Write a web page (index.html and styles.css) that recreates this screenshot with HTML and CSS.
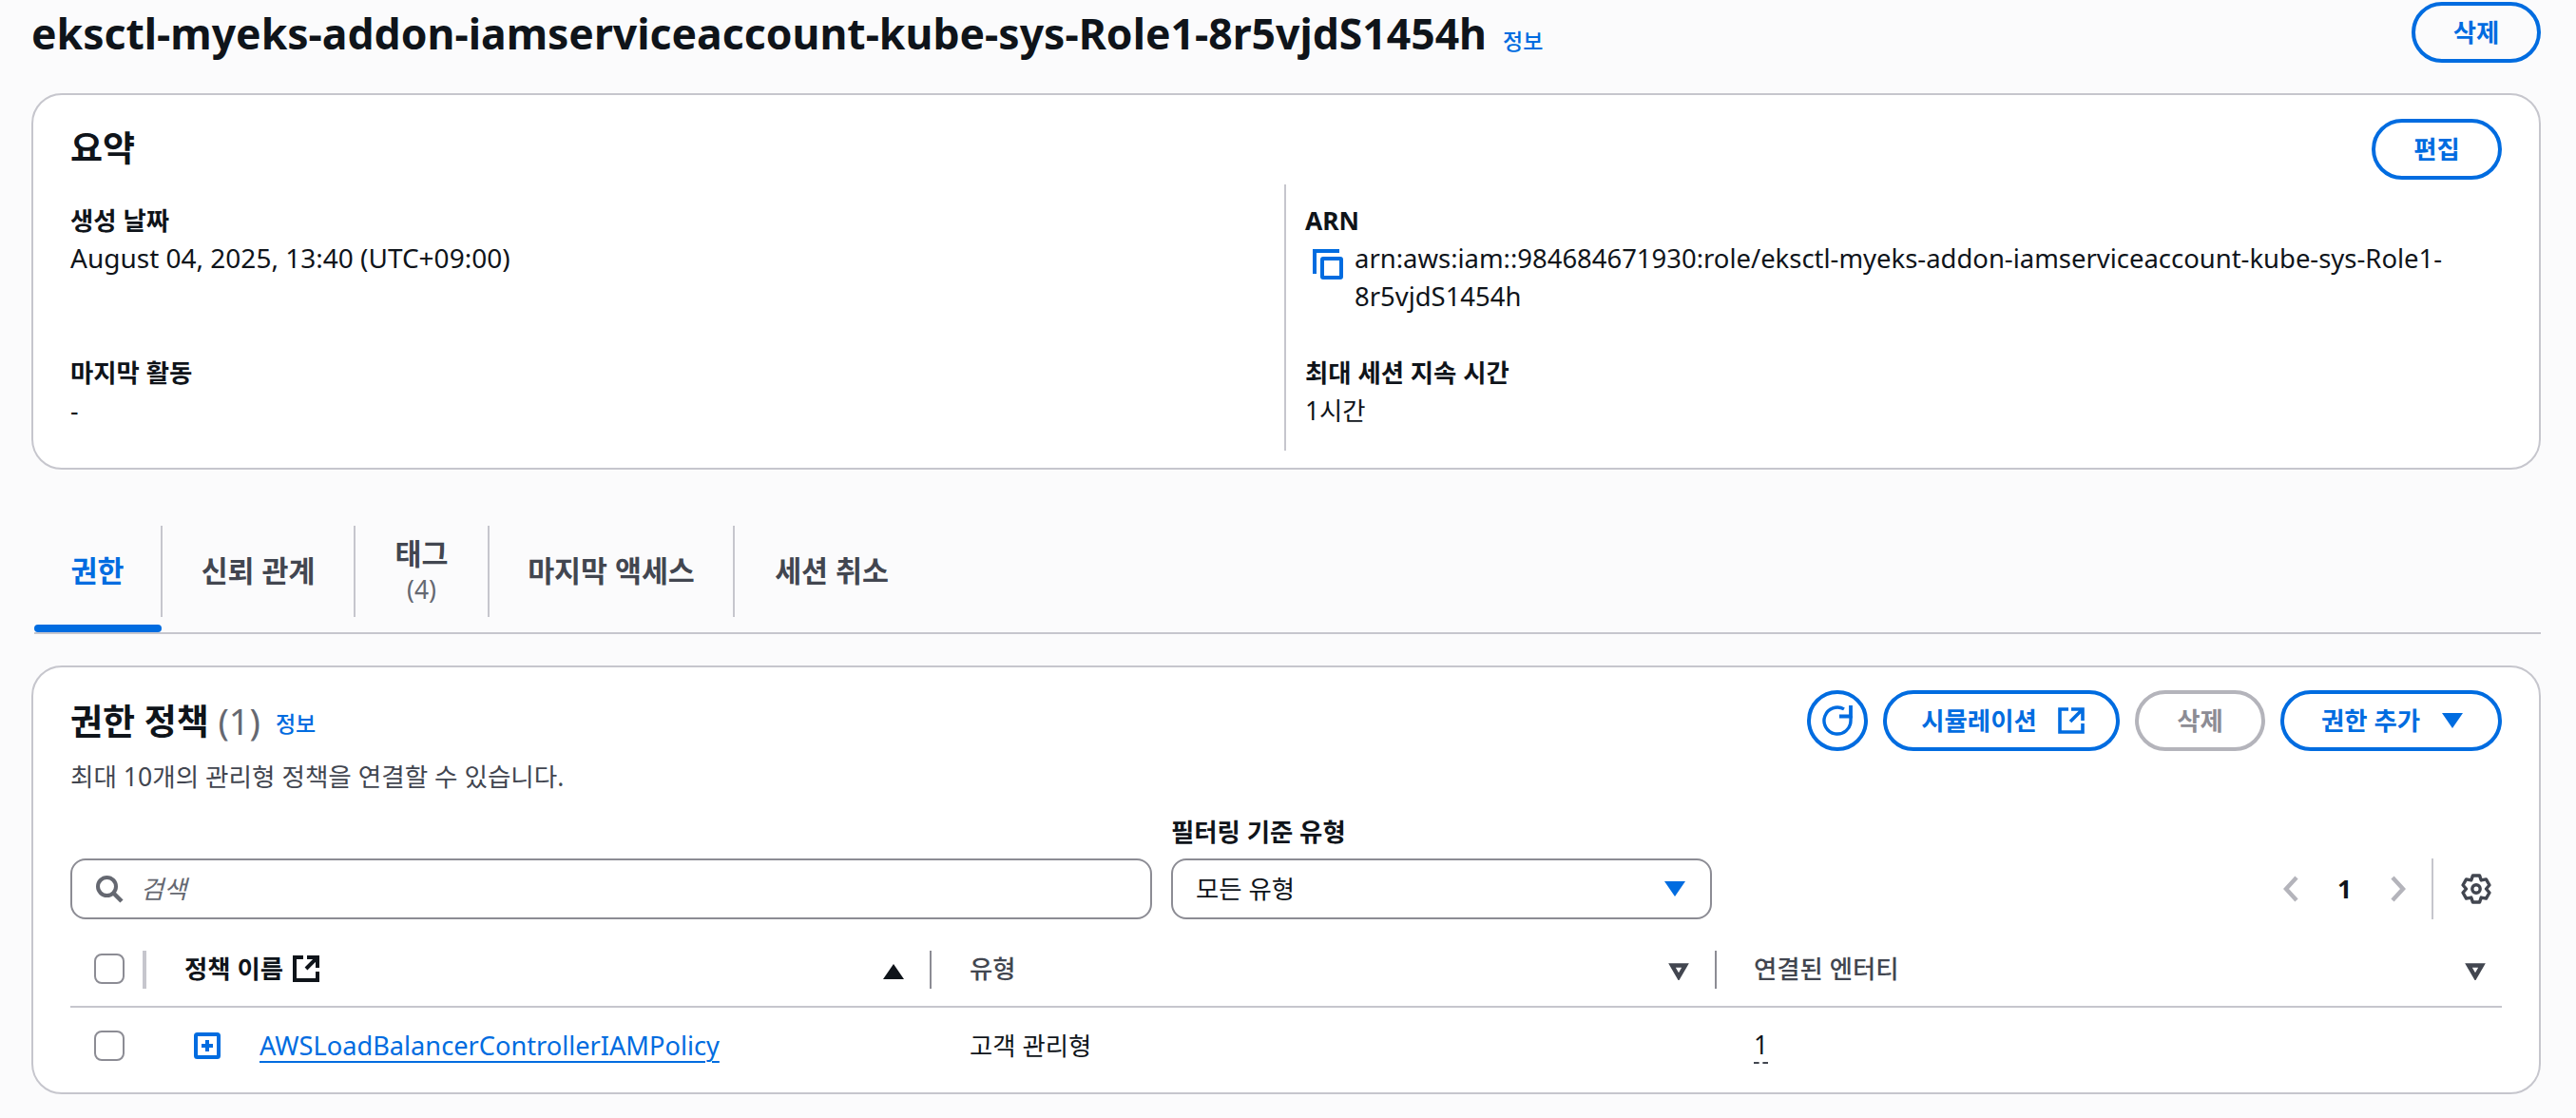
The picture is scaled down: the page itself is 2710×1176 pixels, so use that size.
FILE: index.html
```html
<!DOCTYPE html>
<html lang="ko">
<head>
<meta charset="utf-8">
<title>IAM Role</title>
<link rel="stylesheet" href="styles.css">
</head>
<body>
<div class="page">
  <header class="page-head">
    <div class="title-wrap">
      <h1 class="title">eksctl-myeks-addon-iamserviceaccount-kube-sys-Role1-8r5vjdS1454h</h1>
      <a class="info info-title">정보</a>
    </div>
    <button class="btn btn-top">삭제</button>
  </header>

  <section class="card summary">
    <div class="summary-head">
      <h2 class="h2">요약</h2>
      <button class="btn btn-edit">편집</button>
    </div>
    <div class="summary-grid">
      <div class="col col-left">
        <div class="kv">
          <div class="k">생성 날짜</div>
          <div class="v date">August 04, 2025, 13:40 (UTC+09:00)</div>
        </div>
        <div class="kv">
          <div class="k">마지막 활동</div>
          <div class="v">-</div>
        </div>
      </div>
      <div class="col col-right">
        <div class="kv">
          <div class="k">ARN</div>
          <div class="arn">
            <svg class="copy" viewBox="0 0 32 32" fill="none" stroke="#006ce0" stroke-width="4"><path d="M2 26V2h26"/><rect x="10" y="10" width="20" height="20" rx="1"/></svg>
            <div class="v arn-text">arn:aws:iam::984684671930:role/eksctl-myeks-addon-iamserviceaccount-kube-sys-Role1-<br>8r5vjdS1454h</div>
          </div>
        </div>
        <div class="kv">
          <div class="k">최대 세션 지속 시간</div>
          <div class="v">1시간</div>
        </div>
      </div>
    </div>
  </section>

  <nav class="tabs">
    <div class="tab tab-active"><span>권한</span></div>
    <div class="tab tab-trust"><span>신뢰 관계</span></div>
    <div class="tab tab-tag"><span>태그</span><span class="count">(4)</span></div>
    <div class="tab tab-last"><span>마지막 액세스</span></div>
    <div class="tab tab-end"><span>세션 취소</span></div>
  </nav>

  <section class="card policies">
    <div class="pol-head">
      <div>
        <div class="pol-title"><h2 class="h2">권한 정책 <span class="h2-count">(1)</span></h2><a class="info">정보</a></div>
        <p class="desc">최대 10개의 관리형 정책을 연결할 수 있습니다.</p>
      </div>
      <div class="actions">
        <button class="btn btn-icon" aria-label="새로 고침">
          <svg class="ic-refresh" viewBox="0 0 32 32" fill="none" stroke="#006ce0" stroke-width="3.4"><path d="M30 11v5A14 14 0 1 1 23 3.900"/><path d="M30 0v11.500H18" stroke-width="3.8"/></svg>
        </button>
        <button class="btn btn-sim">시뮬레이션
          <svg class="ic-ext" viewBox="0 0 28 28" fill="none" stroke="currentColor" stroke-width="3.6"><path d="M11 2H2v24h24v-9"/><path d="M14 2h12v12M26 2 13 15" /></svg>
        </button>
        <button class="btn btn-del" disabled>삭제</button>
        <button class="btn btn-add">권한 추가
          <svg class="ic-caret" viewBox="0 0 24 18"><path d="M1 1h22L12 17z" fill="#006ce0"/></svg>
        </button>
      </div>
    </div>

    <div class="filters">
      <div class="search">
        <svg class="ic-search" viewBox="0 0 30 30" fill="none" stroke="#656871" stroke-width="4"><circle cx="12.5" cy="12.5" r="9.5"/><path d="m19 19 9 9" stroke-width="4.5"/></svg>
        <span class="ph">검색</span>
      </div>
      <div class="filter">
        <div class="filter-label">필터링 기준 유형</div>
        <div class="select"><span>모든 유형</span><svg class="ic-caret" viewBox="0 0 24 18"><path d="M1 1h22L12 17z" fill="#006ce0"/></svg></div>
      </div>
      <div class="pager">
        <svg class="ic-chev" viewBox="0 0 16 28" fill="none" stroke="#b4b4bb" stroke-width="4.4"><path d="M14 2 3 14l11 12"/></svg>
        <span class="pg-num">1</span>
        <svg class="ic-chev" viewBox="0 0 16 28" fill="none" stroke="#b4b4bb" stroke-width="4.4"><path d="m2 2 11 12L2 26"/></svg>
        <i class="pg-sep"></i>
        <svg class="ic-gear" viewBox="0 0 32 32" fill="none" stroke="#424650" stroke-width="3.4" stroke-linejoin="round"><path d="M12.490 1.930 19.510 1.930 21.250 6.910 26.430 5.920 29.940 12 26.500 16 29.940 20 26.430 26.080 21.250 25.090 19.510 30.070 12.490 30.070 10.750 25.090 5.570 26.080 2.060 20 5.500 16 2.060 12 5.570 5.920 10.750 6.910Z"/><circle cx="16" cy="16" r="4.200"/></svg>
      </div>
    </div>

    <div class="table">
      <div class="tr th">
        <div class="cell c-check"><i class="checkbox"></i><i class="th-sep"></i></div>
        <div class="cell c-name">
          <span class="th-strong">정책 이름</span>
          <svg class="ic-ext-b" viewBox="0 0 28 28" fill="none" stroke="#0f141a" stroke-width="4"><path d="M11 2H2v24h24v-9"/><path d="M15 2h11v11M26 2 14 14"/></svg>
          <svg class="ic-sort up" viewBox="0 0 24 18"><path d="M12 1 23 17H1z" fill="#0f141a"/></svg>
          <i class="th-sep dark"></i>
        </div>
        <div class="cell c-type">유형
          <svg class="ic-sort down" viewBox="0 0 24 18" fill="none" stroke="#424650" stroke-width="4.4"><path d="M5 2.500h14l-7 12z"/></svg>
          <i class="th-sep dark"></i>
        </div>
        <div class="cell c-ent">연결된 엔터티
          <svg class="ic-sort down" viewBox="0 0 24 18" fill="none" stroke="#424650" stroke-width="4.4"><path d="M5 2.500h14l-7 12z"/></svg>
        </div>
      </div>
      <div class="tr td">
        <div class="cell c-check"><i class="checkbox"></i></div>
        <div class="cell c-name">
          <svg class="ic-plus" viewBox="0 0 28 28"><rect x="2" y="2" width="24" height="24" rx="1.500" fill="none" stroke="#006ce0" stroke-width="4"/><path d="M14 8v12M8 14h12" stroke="#006ce0" stroke-width="4"/></svg>
          <a class="link">AWSLoadBalancerControllerIAMPolicy</a>
        </div>
        <div class="cell c-type">고객 관리형</div>
        <div class="cell c-ent"><span class="dotted">1</span></div>
      </div>
    </div>
  </section>
</div>
</body>
</html>
```
FILE: styles.css
```css
* { box-sizing: border-box; }
html, body { margin: 0; height: 100%; }
body {
  background: #fbfbfc;
  color: #0f141a;
  font-family: "Noto Sans", "Noto Sans CJK KR", sans-serif;
  font-size: 26.4px;
  line-height: 40px;
  overflow: hidden;
}
.page { padding: 0 37px 0 33px; }
h1, h2, p { margin: 0; }
svg { display: block; flex: none; }
i { display: block; }

.page-head { display: flex; justify-content: space-between; height: 98px; padding-top: 2px; }
.title-wrap { display: flex; align-items: baseline; gap: 17px; height: 72px; padding-top: 1px; }
.title { font-size: 44.5px; line-height: 64px; font-weight: 700; white-space: nowrap; }
.info { color: #006ce0; font-size: 23px; font-weight: 500; line-height: 32px; }

.btn {
  height: 64px;
  border: 4px solid #006ce0;
  border-radius: 40px;
  background: #fff;
  color: #006ce0;
  font: 700 26.4px/1 "Noto Sans", "Noto Sans CJK KR", sans-serif;
  display: flex;
  align-items: center;
  justify-content: center;
  gap: 22px;
  padding: 0;
}
.btn-top { width: 136px; background: #fbfbfc; }
.btn-edit { width: 137px; }

.card { background: #fff; border: 2px solid #c6c6cd; border-radius: 32px; }
.summary { height: 396px; padding: 25px 39px 0 39px; }
.summary-head { display: flex; justify-content: space-between; align-items: center; height: 64px; }
.h2 { font-size: 37px; line-height: 48px; font-weight: 700; }
.summary .h2 { margin-top: -3px; }
.summary-grid { display: grid; grid-template-columns: 1277px 1fr; grid-template-rows: 280px; margin-top: 5px; }
.col { display: flex; flex-direction: column; }
.col-right { border-left: 2px solid #c6c6cd; padding-left: 20px; }
.kv { height: 160px; padding-top: 18px; }
.kv:last-child { height: 120px; }
.k { font-weight: 700; line-height: 40px; }
.v { line-height: 40px; }
.date { font-size: 28px; margin-top: -1px; }
.arn-text { font-size: 27.45px; }
.arn { display: flex; gap: 12px; padding-left: 8px; }
.copy { width: 32px; height: 32px; margin-top: 10px; }

.tabs { display: flex; height: 173px; margin-left: 3px; padding-top: 59px; border-bottom: 2px solid #c6c6cd; align-items: flex-start; }
.tab {
  height: 96px;
  position: relative;
  display: flex;
  flex-direction: column;
  align-items: center;
  justify-content: center;
  color: #424650;
  font-weight: 700;
  font-size: 30.4px;
  line-height: 38px;
}
.tab > span { display: block; }
.tab-active, .tab-trust, .tab-tag, .tab-last { border-right: 2px solid #c6c6cd; }
.tab-active { width: 135px; color: #006ce0; }
.tab-active::after {
  content: "";
  position: absolute;
  left: 0;
  right: -1px;
  top: 104px;
  height: 8px;
  border-radius: 4px;
  background: #006ce0;
}
.tab-trust { width: 203px; }
.tab-tag { width: 141px; }
.tab-last { width: 258px; }
.tab-end { width: 204px; }
.count { font-weight: 400; font-size: 26.4px; color: #656871; line-height: 36px; }

.policies { height: 451px; margin-top: 33px; padding: 24px 39px 0 39px; }
.pol-head { display: flex; justify-content: space-between; height: 124px; }
.pol-title { display: flex; align-items: center; gap: 16px; height: 64px; }
.pol-title .info { padding-top: 6px; }
.h2-count { color: #656871; font-weight: 400; font-size: 38px; }
.desc { line-height: 40px; font-size: 26.6px; margin-top: 7px; color: #424650; }
.actions { display: flex; gap: 16px; }
.btn-icon { width: 64px; border-radius: 50%; }
.btn-sim { width: 249px; padding-left: 3px; }
.btn-del { width: 137px; border-color: #b4b4bb; color: #8c8c94; }
.btn-add { width: 233px; padding-left: 3px; }
.ic-refresh { width: 32px; height: 32px; }
.ic-ext { width: 28px; height: 28px; }
.ic-caret { width: 24px; height: 18px; }

.filters { display: grid; grid-template-columns: 1138px 569px 1fr; column-gap: 20px; height: 112px; margin-top: 5px; align-items: end; }
.search {
  height: 64px;
  border: 2px solid #8c8c94;
  border-radius: 16px;
  display: flex;
  align-items: center;
  gap: 18px;
  padding-left: 24px;
  background: #fff;
}
.ic-search { width: 30px; height: 30px; }
.ph { font-style: italic; color: #656871; }
.filter-label { font-weight: 700; line-height: 40px; margin-bottom: 8px; }
.select {
  height: 64px;
  border: 2px solid #8c8c94;
  border-radius: 16px;
  display: flex;
  align-items: center;
  justify-content: space-between;
  padding: 0 25px 0 24px;
}
.pager { display: flex; align-items: center; justify-content: flex-end; height: 64px; }
.ic-chev { width: 16px; height: 28px; }
.pg-num { font-weight: 700; width: 97px; text-align: center; }
.pg-sep { width: 2px; height: 64px; background: #c6c6cd; margin-left: 27px; margin-right: 29px; }
.ic-gear { width: 32px; height: 32px; margin-right: 11px; }

.tr { display: grid; grid-template-columns: 80px 826px 826px 1fr; }
.th { height: 93px; border-bottom: 2px solid #c6c6cd; color: #424650; font-weight: 500; }
.td { height: 80px; }
.cell { display: flex; align-items: center; position: relative; }
.th .cell { padding-top: 13px; }
.c-check { padding-left: 25px; }
.checkbox { width: 32px; height: 32px; border: 2px solid #8c8c94; border-radius: 8px; background: #fff; }
.th-sep { position: absolute; right: 0; top: 33px; width: 4px; height: 40px; background: #c6c6cd; }
.th-sep.dark { width: 2px; background: #8c8c94; }
.c-name { padding-left: 40px; gap: 10px; }
.c-type { padding-left: 40px; }
.c-ent { padding-left: 39px; }
.th .c-name { color: #0f141a; }
.th-strong { font-weight: 700; }
.ic-ext-b { width: 28px; height: 28px; }
.ic-sort { width: 24px; height: 18px; position: absolute; right: 28px; top: 46px; }
.th .c-ent .ic-sort { right: 16px; }
.td .c-name { padding-left: 50px; gap: 41px; }
.ic-plus { width: 28px; height: 28px; }
.link { color: #006ce0; font-size: 27.2px; text-decoration: underline; text-decoration-thickness: 2px; text-underline-offset: 6px; }
.dotted { border-bottom: 2px dashed #424650; line-height: 36px; }
```
